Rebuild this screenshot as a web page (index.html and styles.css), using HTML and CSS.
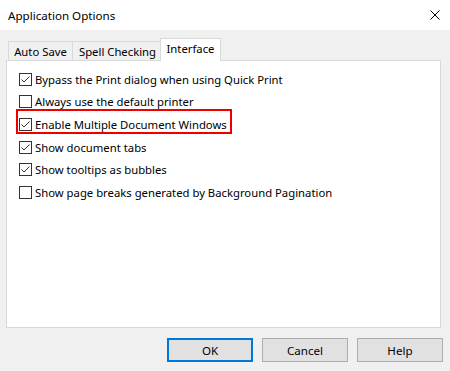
FILE: index.html
```html
<!DOCTYPE html>
<html>
<head>
<meta charset="utf-8">
<link rel="stylesheet" href="styles.css">
</head>
<body>
<div class="window">
  <div class="titlebar">
    <span class="title">Application Options</span>
    <svg class="close" width="10" height="10" viewBox="0 0 10 10"><path d="M0.5 0.5 L9.5 9.5 M9.5 0.5 L0.5 9.5" stroke="#000" stroke-width="1" fill="none"/></svg>
  </div>
  <div class="content">
    <div class="tabs">
      <div class="tab t1">Auto Save</div>
      <div class="tab t2">Spell Checking</div>
      <div class="tab active t3">Interface</div>
    </div>
    <div class="panel">
      <div class="row"><span class="cb checked"><svg width="13" height="13" viewBox="0 0 13 13"><path d="M2.5 6.5 L5 9 L10.5 3.5" stroke="#333" stroke-width="1" fill="none"/></svg></span><span class="label">Bypass the Print dialog when using Quick Print</span></div>
      <div class="row"><span class="cb"></span><span class="label">Always use the default printer</span></div>
      <div class="row"><span class="cb checked"><svg width="13" height="13" viewBox="0 0 13 13"><path d="M2.5 6.5 L5 9 L10.5 3.5" stroke="#333" stroke-width="1" fill="none"/></svg></span><span class="label">Enable Multiple Document Windows</span></div>
      <div class="row"><span class="cb checked"><svg width="13" height="13" viewBox="0 0 13 13"><path d="M2.5 6.5 L5 9 L10.5 3.5" stroke="#333" stroke-width="1" fill="none"/></svg></span><span class="label">Show document tabs</span></div>
      <div class="row"><span class="cb checked"><svg width="13" height="13" viewBox="0 0 13 13"><path d="M2.5 6.5 L5 9 L10.5 3.5" stroke="#333" stroke-width="1" fill="none"/></svg></span><span class="label">Show tooltips as bubbles</span></div>
      <div class="row"><span class="cb"></span><span class="label">Show page breaks generated by Background Pagination</span></div>
      <div class="highlight"></div>
    </div>
    <div class="buttons">
      <button class="btn default">OK</button>
      <button class="btn">Cancel</button>
      <button class="btn">Help</button>
    </div>
  </div>
</div>
</body>
</html>
```
FILE: styles.css
```css
* { box-sizing: border-box; }
html, body { margin: 0; padding: 0; }
body {
  width: 450px;
  height: 371px;
  overflow: hidden;
  font-family: "Noto Sans", "Open Sans", sans-serif;
  font-size: 11.3px;
  color: #000;
}
.window {
  width: 450px;
  height: 371px;
  background: #f0f0f0;
  display: flex;
  flex-direction: column;
}
.titlebar {
  height: 30px;
  background: #fff;
  display: flex;
  align-items: center;
  justify-content: space-between;
  padding: 0 10px 0 8px;
}
.title { font-size: 11.6px; }
.close { display: block; margin-top: -1px; }
.content {
  padding: 8px 9px 0 6px;
  display: flex;
  flex-direction: column;
}
.tabs {
  display: flex;
  align-items: flex-end;
  height: 22px;
  padding-left: 2px;
}
.tab {
  height: 19px;
  border: 1px solid #d9d9d9;
  border-bottom: none;
  background: #f0f0f0;
  display: flex;
  align-items: center;
  justify-content: center;
  margin-right: -1px;
}
.t1 { width: 65px; }
.t2 { width: 91px; }
.tab.active {
  width: 61px;
  height: 23px;
  margin: 0 0 -1px -2px;
  padding-bottom: 3px;
  background: #fff;
  position: relative;
  z-index: 1;
}
.panel {
  height: 268px;
  width: 435px;
  background: #fff;
  border: 1px solid #d9d9d9;
  padding: 7px 0 0 12px;
  position: relative;
}
.row {
  height: 22.6px;
  display: flex;
  align-items: center;
}
.cb {
  width: 13px;
  height: 13px;
  border: 1px solid #333;
  background: #fff;
  position: relative;
  flex: none;
}
.cb svg { position: absolute; left: -1px; top: -1px; }
.label { margin-left: 3px; white-space: nowrap; }
.highlight {
  position: absolute;
  left: 9px;
  top: 48px;
  width: 216px;
  height: 25px;
  border: 2px solid #ee0000;
}
.buttons {
  display: flex;
  justify-content: flex-end;
  gap: 9px;
  margin-top: 10px;
  margin-right: -2px;
}
.btn {
  width: 86px;
  height: 24px;
  background: #e1e1e1;
  border: 1px solid #adadad;
  font-family: inherit;
  font-size: 11.6px;
  color: #000;
  padding: 0;
}
.btn.default { border: 2px solid #0078d7; }
```
